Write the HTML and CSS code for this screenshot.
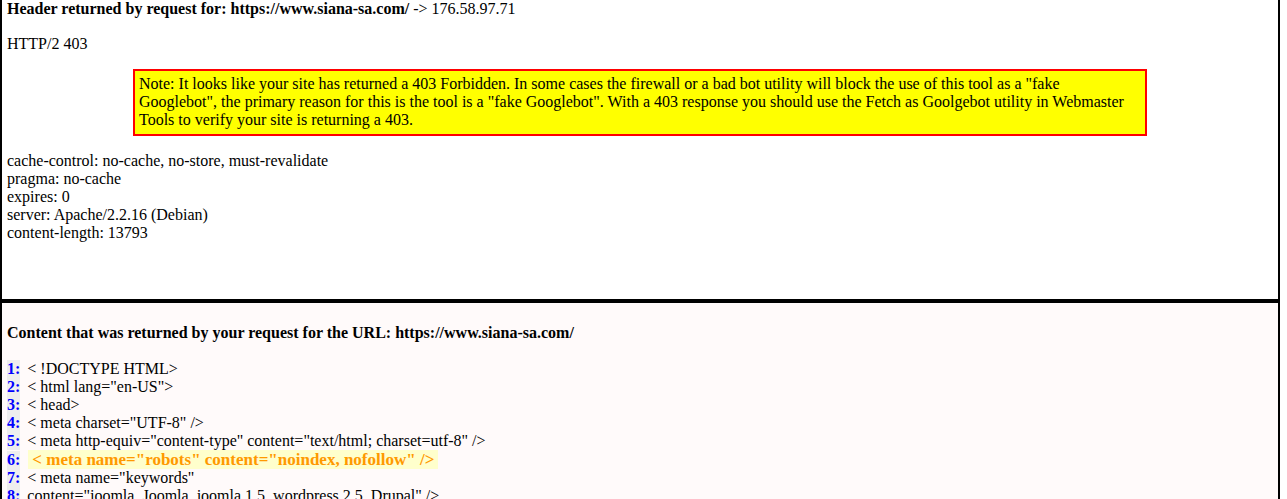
FILE: index.html
```html
<!DOCTYPE html>
<html lang="en">
  <head>
    <meta charset="UTF-8" />
    <meta name="viewport" content="width=device-width, initial-scale=1.0" />
    <title>Fetch as Googlebot</title>
    <link rel="stylesheet" href="styles.css">
  </head>
  <body>
    <div class="frame">
      <div class="header-box">
        <div class="title"><b>Header returned by request for: https://www.siana-sa.com/</b> -&gt; 176.58.97.71</div>
        <div class="status">HTTP/2 403</div>

        <div class="note">
          Note: It looks like your site has returned a 403 Forbidden. In some cases the firewall or a bad bot utility will block the use of this tool as a "fake Googlebot", the primary reason for this is the tool is a "fake Googlebot". With a 403 response you should use the Fetch as Goolgebot utility in Webmaster Tools to verify your site is returning a 403.
        </div>

        <div class="headers">
          cache-control: no-cache, no-store, must-revalidate<br>
          pragma: no-cache<br>
          expires: 0<br>
          server: Apache/2.2.16 (Debian)<br>
          content-length: 13793
        </div>
      </div>

      <div class="content-box">
        <div class="title"><b>Content that was returned by your request for the URL: https://www.siana-sa.com/</b></div>

        <div class="source">
          <div class="line"><span class="num">1:</span><span class="code">&lt; !DOCTYPE HTML&gt;</span></div>
          <div class="line"><span class="num">2:</span><span class="code">&lt; html lang="en-US"&gt;</span></div>
          <div class="line"><span class="num">3:</span><span class="code">&lt; head&gt;</span></div>
          <div class="line"><span class="num">4:</span><span class="code">&lt; meta charset="UTF-8" /&gt;</span></div>
          <div class="line"><span class="num">5:</span><span class="code">&lt; meta http-equiv="content-type" content="text/html; charset=utf-8" /&gt;</span></div>
          <div class="line"><span class="num">6:</span><span class="code robots">&lt; meta name="robots" content="noindex, nofollow" /&gt;</span></div>
          <div class="line"><span class="num">7:</span><span class="code">&lt; meta name="keywords"</span></div>
          <div class="line"><span class="num">8:</span><span class="code">content="joomla, Joomla, joomla 1.5, wordpress 2.5, Drupal" /&gt;</span></div>
        </div>
      </div>
    </div>
  </body>
</html>
```

FILE: styles.css
```css
body {
  margin: 0;
  font-family: "Liberation Serif", "Times New Roman", serif;
  font-size: 16px;
  line-height: 18px;
  color: #000;
  background-color: #fff;
  overflow: hidden;
}

.frame {
  width: 1280px;
  border-left: 2px solid #000;
  border-right: 2px solid #000;
  box-sizing: border-box;
}

.header-box {
  height: 303px;
  padding: 0 5px;
  border-bottom: 4px solid #000;
  box-sizing: border-box;
}

.status {
  margin-top: 17px;
}

.note {
  width: 1014px;
  margin: 16px auto 16px;
  padding: 4px 4px 5px;
  background-color: #ffff00;
  border: 2px solid #ff0000;
  box-sizing: border-box;
}

.content-box {
  height: 196px;
  padding: 21px 5px 0;
  background-color: #fffafa;
}

.source {
  margin-top: 18px;
}

.line {
  white-space: nowrap;
}

.num {
  display: inline-block;
  font-weight: bold;
  color: #0000ff;
  background-color: #eeeeee;
  margin-right: 7px;
}

.robots {
  display: inline-block;
  padding: 0 4px;
  margin-left: 1px;
  font-size: 17px;
  line-height: 19px;
  font-weight: bold;
  color: #ff9900;
  background-color: #ffffcc;
}
```
